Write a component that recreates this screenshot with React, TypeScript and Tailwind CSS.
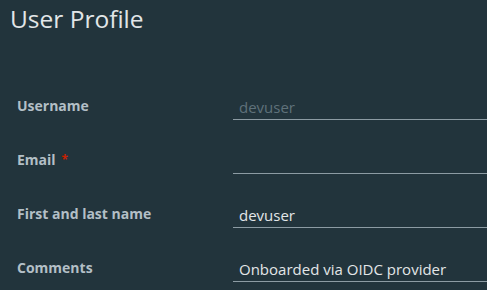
import React from "react";

const rows = [
  { label: "Username", value: "devuser", disabled: true, required: false },
  { label: "Email", value: "", disabled: false, required: true },
  { label: "First and last name", value: "devuser", disabled: false, required: false },
  { label: "Comments", value: "Onboarded via OIDC provider", disabled: false, required: false },
];

export default function App() {
  return (
    <div
      className="w-[487px] h-[290px] overflow-hidden bg-[#22343c]"
      style={{ fontFamily: "'Open Sans', Lato, sans-serif" }}
    >
      <h2 className="pl-[10px] pt-[3px] text-[24.5px] leading-[32px] text-[#e2e6e8] font-normal">
        User Profile
      </h2>
      <div className="mt-[31px] flex flex-col">
        {rows.map((r) => (
          <div key={r.label} className="flex items-end h-[54px]">
            <div className="w-[233px] shrink-0 pl-[17px] pb-[4px] text-[14px] leading-[20px] font-bold text-[#b3bfc6] flex items-center">
              <span>{r.label}</span>
              {r.required && <span className="ml-[6px] text-[12px] text-[#c92100]">*</span>}
            </div>
            <div className="flex-1 h-[26px] border-b border-[#8c9ba3] pl-[6px] flex items-center text-[15px] leading-[20px]">
              <span className={r.disabled ? "text-[#5f717a]" : "text-[#e3e6e8]"}>{r.value}</span>
            </div>
          </div>
        ))}
      </div>
    </div>
  );
}
